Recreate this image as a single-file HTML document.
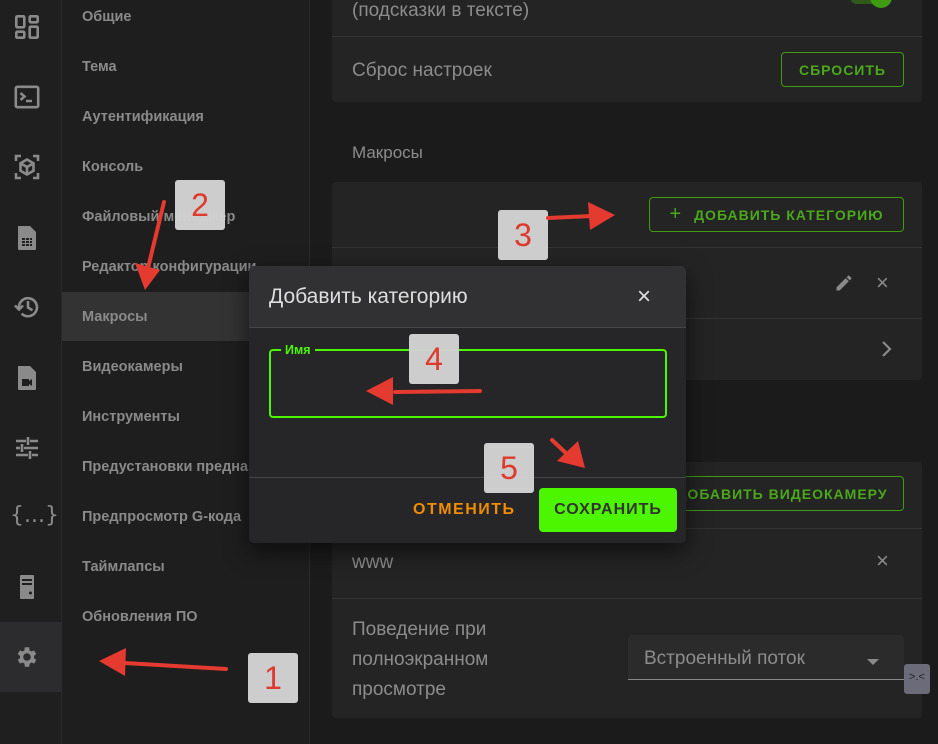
<!DOCTYPE html>
<html><head><meta charset="utf-8"><style>
*{box-sizing:border-box;margin:0;padding:0}
body{width:938px;height:744px;overflow:hidden;background:#1b1b1b;font-family:"Liberation Sans","Noto Sans CJK SC",sans-serif;position:relative}
.abs{position:absolute}
.rail{left:0;top:0;width:62px;height:744px;background:#1f1f1f;border-right:1px solid #2a2a2a}
.menu{left:62px;top:0;width:248px;height:744px;background:#1e1e1e;border-right:1px solid #2a2a2a}
.mi{position:absolute;left:20px;font-size:14.5px;font-weight:bold;color:#8a8a8a}
.card{background:#242424;border-radius:4px;position:absolute;left:332px;width:590px}
.t{color:#8c8c8c;font-size:19px}
.ob{position:absolute;border:1px solid #3f9b12;border-radius:4px;color:#4aa81a;font-weight:bold;font-size:14px;letter-spacing:1px;display:flex;align-items:center;justify-content:center}
.hl{position:absolute;left:0;width:590px;height:1px;background:#333}
.badge{position:absolute;width:50px;height:50px;background:#d3d3d3;border-radius:3px;color:#e53a2f;font-size:32px;text-align:center;line-height:50px;opacity:.97}
svg.ic{position:absolute;fill:#8a8a8a}
svg.st{position:absolute;fill:none;stroke:#8a8a8a;stroke-width:2.6}
</style></head><body>
<div class="abs rail"></div>
<div class="abs" style="left:0;top:622px;width:62px;height:70px;background:#2c2c2e"></div>
<!-- rail icons -->
<svg class="st" style="left:14px;top:14px" width="26" height="26" viewBox="0 0 26 26"><rect x="2.3" y="2.3" width="8" height="11" rx="1"/><rect x="15.7" y="2.3" width="8" height="6" rx="1"/><rect x="15.7" y="12.7" width="8" height="11" rx="1"/><rect x="2.3" y="17.7" width="8" height="6" rx="1"/></svg>
<svg class="st" style="left:14px;top:85px" width="26" height="24" viewBox="0 0 26 24"><rect x="1.8" y="1.8" width="22.4" height="20.4" rx="1.5"/><path d="M6.5 8l4 3.5-4 3.5M12 16h6"/></svg>
<svg class="st" style="left:14px;top:154px" width="26" height="26" viewBox="0 0 26 26"><path d="M2 7V2h5M19 2h5v5M2 19v5h5M24 19v5h-5M13 5.5l6.5 3.7v7.6L13 20.5l-6.5-3.7V9.2zM6.5 9.2L13 13l6.5-3.8M13 13v7.5"/></svg>
<svg class="ic" style="left:16px;top:225px" width="22" height="26" viewBox="0 0 22 26"><path fill-rule="evenodd" d="M2 1h12l6 6v17a1 1 0 0 1-1 1H3a1 1 0 0 1-1-1zM6 13h3v2H6zm4 0h3v2h-3zm4 0h2v2h-2zM6 16h3v2H6zm4 0h3v2h-3zm4 0h2v2h-2zM6 19h3v2H6zm4 0h3v2h-3zm4 0h2v2h-2z"/></svg>
<svg class="st" style="left:12px;top:293px" width="30" height="28" viewBox="0 0 30 28"><path d="M7 15A9 9 0 1 1 9.6 20.6"/><path d="M16 8v6.5l4.5 2.7"/><path d="M3 12.5l4 4 4-4" /></svg>
<svg class="ic" style="left:16px;top:365px" width="22" height="26" viewBox="0 0 22 26"><path fill-rule="evenodd" d="M2 1h12l6 6v17a1 1 0 0 1-1 1H3a1 1 0 0 1-1-1zM6 14h7v7H6zM13 16l3-2v7l-3-2z"/></svg>
<svg class="st" style="left:14px;top:435px" width="26" height="26" viewBox="0 0 26 26" style="stroke-width:2.4"><path d="M2 6h10M16 6h8M14 2v8M2 13h4M10 13h14M8 9v8M2 20h12M18 20h6M16 16v8"/></svg>
<div class="abs" style="left:10px;top:503px;color:#8a8a8a;font-size:22px;font-family:'DejaVu Sans',sans-serif">{...}</div>
<svg class="ic" style="left:19px;top:574px" width="16" height="26" viewBox="0 0 16 26"><path d="M2 1h12a1 1 0 0 1 1 1v22a1 1 0 0 1-1 1H2a1 1 0 0 1-1-1V2a1 1 0 0 1 1-1zM3 5v2h10V5zM3 9v2h10V9zM10 19a1.5 1.5 0 1 0 3 0 1.5 1.5 0 1 0-3 0z" fill-rule="evenodd"/></svg>
<svg class="ic" style="left:14px;top:644px" width="26" height="26" viewBox="0 0 24 24"><path d="M19.4 13a7.5 7.5 0 0 0 0-2l2.1-1.6-2-3.5-2.5 1a7 7 0 0 0-1.7-1L15 3h-4l-.4 2.9a7 7 0 0 0-1.7 1l-2.5-1-2 3.5L6.6 11a7.5 7.5 0 0 0 0 2l-2.1 1.6 2 3.5 2.5-1a7 7 0 0 0 1.7 1L11 21h4l.4-2.9a7 7 0 0 0 1.7-1l2.5 1 2-3.5zM13 15.5a3.5 3.5 0 1 1 0-7 3.5 3.5 0 0 1 0 7z" transform="translate(-1 0)"/></svg>
<!-- menu -->
<div class="abs menu">
<div class="abs" style="left:0;top:292px;width:248px;height:49px;background:#333"></div>
<div class="mi" style="top:9px">Общие</div>
<div class="mi" style="top:59px">Тема</div>
<div class="mi" style="top:109px">Аутентификация</div>
<div class="mi" style="top:159px">Консоль</div>
<div class="mi" style="top:209px">Файловый менеджер</div>
<div class="mi" style="top:259px;white-space:nowrap">Редактор конфигурации</div>
<div class="mi" style="top:309px">Макросы</div>
<div class="mi" style="top:359px">Видеокамеры</div>
<div class="mi" style="top:409px">Инструменты</div>
<div class="mi" style="top:459px;white-space:nowrap">Предустановки преднагрева</div>
<div class="mi" style="top:509px;white-space:nowrap">Предпросмотр G-кода</div>
<div class="mi" style="top:559px">Таймлапсы</div>
<div class="mi" style="top:609px">Обновления ПО</div>
</div>
<!-- main cards -->
<div class="card" style="top:-20px;height:122px">
<div class="t abs" style="left:20px;top:20px">(подсказки в тексте)</div>
<div class="abs" style="left:518px;top:10px;width:36px;height:14px;border-radius:7px;background:#2f5a1a"></div>
<div class="abs" style="left:538px;top:6px;width:22px;height:22px;border-radius:11px;background:#3f9b12"></div>
<div class="hl" style="top:56px"></div>
<div class="t abs" style="left:20px;top:80px">Сброс настроек</div>
<div class="ob" style="left:449px;top:72px;width:123px;height:35px">СБРОСИТЬ</div>
</div>
<div class="abs" style="left:352px;top:143px;color:#8c8c8c;font-size:17px">Макросы</div>
<div class="card" style="top:182px;height:198px">
<div class="ob" style="left:317px;top:15px;width:255px;height:35px"><span style="font-size:20px;font-weight:normal;margin-right:12px">+</span>ДОБАВИТЬ КАТЕГОРИЮ</div>
<div class="hl" style="top:65px"></div>
<svg class="abs" style="left:502px;top:91px" width="20" height="20" viewBox="0 0 24 24"><path fill="#8a8a8a" d="M3 17.25V21h3.75L17.8 9.94l-3.75-3.75zM20.7 7.04a1 1 0 0 0 0-1.41l-2.34-2.34a1 1 0 0 0-1.41 0l-1.83 1.83 3.75 3.75z"/></svg>
<div class="abs" style="left:544px;top:88px;color:#8a8a8a;font-size:22px">×</div>
<div class="hl" style="top:136px"></div>
<svg class="abs" style="left:548px;top:158px" width="14" height="18" viewBox="0 0 14 18"><path d="M3 2l7 7-7 7" stroke="#8a8a8a" stroke-width="2.2" fill="none"/></svg>
</div>
<div class="card" style="top:462px;height:256px">
<div class="ob" style="left:328px;top:14px;width:244px;height:35px">ДОБАВИТЬ ВИДЕОКАМЕРУ</div>
<div class="hl" style="top:66px"></div>
<div class="t abs" style="left:20px;top:90px">www</div>
<div class="abs" style="left:544px;top:86px;color:#8a8a8a;font-size:22px">×</div>
<div class="hl" style="top:136px"></div>
<div class="t abs" style="left:20px;top:153px;line-height:30px">Поведение при<br>полноэкранном<br>просмотре</div>
<div class="abs" style="left:296px;top:173px;width:276px;height:45px;background:#2b2b2b;border-bottom:1px solid #888;border-radius:4px 4px 0 0"></div>
<div class="t abs" style="left:312px;top:186px">Встроенный поток</div>
<div class="abs" style="left:535px;top:197px;width:0;height:0;border-left:6px solid transparent;border-right:6px solid transparent;border-top:6px solid #8a8a8a"></div>
</div>
<div class="abs" style="left:904px;top:664px;width:26px;height:30px;background:#6b6b7a;border-radius:3px;color:#222;font-size:11px;text-align:center;line-height:26px">&gt;.&lt;</div>
<!-- dialog -->
<div class="abs" style="left:249px;top:266px;width:437px;height:277px;background:#262628;border-radius:5px;box-shadow:0 8px 24px rgba(0,0,0,.6);overflow:hidden">
<div class="abs" style="left:0;top:0;width:437px;height:62px;background:#313134;border-bottom:1px solid #45454a"></div>
<div class="abs" style="left:20px;top:19px;color:#dedede;font-size:21px">Добавить категорию</div>
<div class="abs" style="left:388px;top:17px;color:#e0e0e0;font-size:24px">×</div>
<div class="abs" style="left:20px;top:83px;width:398px;height:69px;border:2px solid #4cf500;border-radius:4px"></div>
<div class="abs" style="left:32px;top:77px;padding:0 4px;background:#262628;color:#4cf500;font-size:12.5px;font-weight:bold">Имя</div>
<div class="abs" style="left:0;top:211px;width:437px;height:1px;background:#45454a"></div>
<div class="abs" style="left:164px;top:235px;color:#f08c00;font-size:16px;font-weight:bold;letter-spacing:1.5px">ОТМЕНИТЬ</div>
<div class="abs" style="left:290px;top:222px;width:138px;height:44px;background:#4cf500;border-radius:4px;color:#333;font-size:16px;font-weight:bold;letter-spacing:1px;text-align:center;line-height:44px">СОХРАНИТЬ</div>
</div>
<!-- annotations -->
<div class="badge" style="left:175px;top:180px">2</div>
<div class="badge" style="left:498px;top:210px">3</div>
<div class="badge" style="left:409px;top:334px">4</div>
<div class="badge" style="left:484px;top:443px">5</div>
<div class="badge" style="left:248px;top:653px">1</div>
<svg class="abs" style="left:0;top:0" width="938" height="744" viewBox="0 0 938 744">
<g stroke="#e53a2f" stroke-width="4" stroke-linecap="round" fill="#e53a2f">
<line x1="164" y1="202" x2="148" y2="268"/><polygon stroke="none" points="135,263 145,290 160,270"/>
<line x1="548" y1="218" x2="592" y2="216"/><polygon stroke="none" points="588,202 615,215 590,230"/>
<line x1="480" y1="391" x2="395" y2="392"/><polygon stroke="none" points="366,391 393,377 393,405"/>
<line x1="552" y1="440" x2="568" y2="455"/><polygon stroke="none" points="585,468 578,441 557,461"/>
<line x1="226" y1="669" x2="125" y2="663"/><polygon stroke="none" points="99,661 126,648 125,676"/>
</g></svg>
</body></html>
